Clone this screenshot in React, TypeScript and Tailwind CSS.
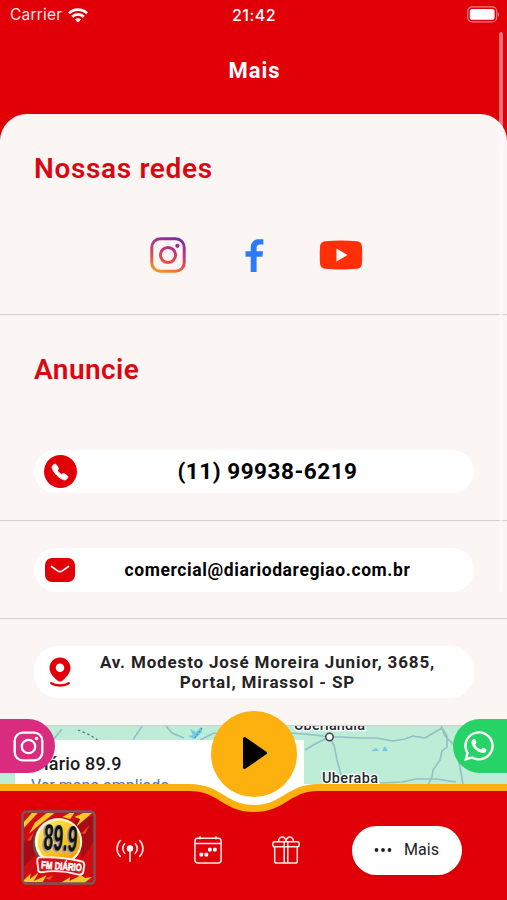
import type { ReactNode } from 'react'
import { FaWhatsapp } from 'react-icons/fa'
import { IoCall } from 'react-icons/io5'

function StatusBar() {
    return (
        <div className="grid grid-cols-3 items-center h-[30px] pl-2.5 pr-[7px] text-white">
            <div className="flex items-center gap-[6px]">
                <span className="font-['Inter'] text-[15.5px] leading-none tracking-[0.2px] opacity-90">Carrier</span>
                <svg width="20" height="15" viewBox="0 0 20 15" fill="none" stroke="white" strokeWidth="2.7">
                    <path d="M1 5.4a12.8 12.8 0 0 1 18 0" />
                    <path d="M4.2 8.7a8.2 8.2 0 0 1 11.6 0" />
                    <path d="M10 14.6 6.9 11.5a4.4 4.4 0 0 1 6.2 0z" fill="white" stroke="none" />
                </svg>
            </div>
            <span className="font-['Inter'] font-medium text-[16px] leading-none tracking-[0.5px] text-center pr-[2px]">21:42</span>
            <div className="flex justify-end mb-px">
                <svg width="33" height="17" viewBox="0 0 33 17" fill="none">
                    <rect x="0.7" y="0.9" width="29" height="15" rx="4.5" stroke="white" strokeOpacity="0.5" strokeWidth="1.2" />
                    <rect x="2.8" y="3" width="24.8" height="10.8" rx="2.6" fill="white" />
                    <path d="M31 6.5v4c1.7-.7 1.7-3.3 0-4z" fill="white" fillOpacity="0.5" />
                </svg>
            </div>
        </div>
    )
}

function InstagramIcon() {
    return (
        <svg width="36" height="36" viewBox="0 0 36 36" fill="none" stroke="url(#ig)" strokeWidth="3">
            <defs>
                <linearGradient id="ig" x1="10" y1="36" x2="22" y2="0" gradientUnits="userSpaceOnUse">
                    <stop offset="0" stopColor="#f99a26" />
                    <stop offset="0.35" stopColor="#e2504a" />
                    <stop offset="0.65" stopColor="#c4327f" />
                    <stop offset="1" stopColor="#7a2fa0" />
                </linearGradient>
            </defs>
            <rect x="1.8" y="1.8" width="32.4" height="32.4" rx="8.5" />
            <circle cx="18" cy="18" r="7.6" />
            <circle cx="27.4" cy="8.8" r="2.1" fill="#9c2c92" stroke="none" />
        </svg>
    )
}

function PinIcon() {
    return (
        <svg width="22" height="30" viewBox="0 0 22 30" fill="none">
            <path fillRule="evenodd" d="M11 .5C4.9 .5.5 5.2.5 11c0 5.4 4.6 9.6 8 12.6 1.5 1.3 3.5 1.3 5 0 3.4-3 8-7.2 8-12.6C21.5 5.2 17.1.5 11 .5zm0 14.6a4.3 4.3 0 1 1 0-8.6 4.3 4.3 0 0 1 0 8.6z" fill="#e10008" />
            <path d="M2.3 26.2c4.5 3 12.9 3 17.4 0" stroke="#e10008" strokeWidth="2.4" strokeLinecap="round" />
        </svg>
    )
}

function ContactRow({ icon, children, className }: { icon: ReactNode; children: ReactNode; className: string }) {
    return (
        <div className={`flex items-center bg-white ml-[34px] mr-[33px] pl-[9px] rounded-[24px] ${className}`}>
            <div className="flex items-center justify-center w-[34px] shrink-0">{icon}</div>
            <div className="flex-1 pr-[16px] text-center font-bold text-black">{children}</div>
        </div>
    )
}

function MapPreview() {
    return (
        <div className="relative h-[59px] overflow-hidden bg-[#bdecd7] border-t border-[#cfcfcf]">
            <svg className="absolute inset-0" width="507" height="59" viewBox="0 0 507 59" fill="none">
                <g stroke="#94bfc5" strokeWidth="1.6" strokeLinejoin="round">
                    <path d="M53 14l9-11M133 14c3-6 6-8 9-14M166 0l6 7 12 5M200 14l14-7 12 3" />
                    <path d="M290 7l25 2 14 2 12 0 16 1 20 0 16 3 12-2 8-3 12 2 10-6 7-4 5 8v11l-5 4-2 9-7 10-1 7-4 8M305 24l10-6 14-7 5 8 3 15 6 22M380 57l22-1 14-3 20 0 20 3M441 0l4 10 9 9 5 17 4 22" />
                </g>
                <path d="M78 4l12 5 9 6" stroke="#5d7d7f" strokeWidth="1.3" strokeDasharray="2.5 2.5" />
                <path d="M190 3l6 3 5-5 1 5-4 4-4 3-6-3 5-1zM371 25l5-3 3 3zM382 25l3-5 3 5z" fill="#70cbe9" />
                <path d="M202 2l-8 11" stroke="#4c98aa" strokeWidth="1.3" strokeDasharray="2 1.5" />
                <circle cx="329.5" cy="11" r="3.7" fill="white" stroke="#3d4546" strokeWidth="1.5" />
                <g className="font-['Roboto'] font-medium" fill="#24282a" stroke="white" strokeWidth="2.5" paintOrder="stroke" fontSize="14.5">
                    <text x="294" y="3.5" textLength="71">Uberlândia</text>
                    <text x="322" y="57" textLength="56">Uberaba</text>
                </g>
            </svg>
            <div className="absolute left-[15px] top-[14px] w-[289px] h-[60px] bg-white pl-4 pt-[15px] font-['Roboto'] leading-none">
                <p className="text-[18px] font-medium tracking-[0.2px] text-[#1b1b1b] pl-px">Diário 89.9</p>
                <p className="text-[16px] text-[#4278d2] mt-[5px]">Ver mapa ampliado</p>
            </div>
        </div>
    )
}

function StationLogo() {
    return (
        <svg className="mb-[5px]" width="75" height="75" viewBox="0 0 76 76">
            <defs>
                <linearGradient id="disc" x1="0" y1="0" x2="1" y2="1">
                    <stop offset="0" stopColor="#fff36a" />
                    <stop offset="0.5" stopColor="#ffc81b" />
                    <stop offset="1" stopColor="#f28b09" />
                </linearGradient>
                <clipPath id="logoClip"><rect x="2" y="2" width="72" height="72" rx="3" /></clipPath>
            </defs>
            <g clipPath="url(#logoClip)">
                <rect width="76" height="76" fill="#d30b12" />
                <path d="M0 36L30 8 16 44 2 58zM54 10l22-4v22L62 50z" fill="#a80b12" />
                <path d="M3 12L11 3h6L3 18zM14 13L26 3h8L20 14 8 24zM54 7l9-4h9L56 17l4-8zM50 9l-8-2 7-4h5zM2 72l8-8-1 6 9-7-5 9 13-6-4 7H2zM40 74l10-6-1 4 12-6 4 3 7-1-8 6z" fill="#f8c829" />
                <path d="M6 31l7-8-3 8zM24 69l9-3-4 5zM61 24l8-8-4 8z" fill="#ee4a1c" />
                <circle cx="35" cy="34" r="23" fill="#5b5554" />
                <circle cx="38" cy="32" r="24" fill="#fff8dc" />
                <circle cx="38.5" cy="32" r="21.5" fill="url(#disc)" />
                <g transform="rotate(4 40 32)" fontFamily="'Liberation Sans Narrow', 'Liberation Sans', sans-serif" fontWeight="700" fontSize="37">
                    <text x="21.5" y="42" textLength="34" lengthAdjust="spacingAndGlyphs" fill="#9a9690" stroke="#b9b5ad" strokeWidth="2.5" paintOrder="stroke">89.9</text>
                    <text x="23" y="41" textLength="34" lengthAdjust="spacingAndGlyphs" fill="#111">89.9</text>
                </g>
                <path d="M19 48Q40 47 61 52q4 1 3 5l-1 6q-1 3-5 2.5Q39 60 21 63q-4 .5-3.5-3.5l-1-7q-.4-4 2.5-4.5z" fill="#d8121a" stroke="#f8efe5" strokeWidth="2" />
                <g transform="rotate(4 40 58)">
                    <text x="20.5" y="60.5" textLength="41" lengthAdjust="spacingAndGlyphs" fill="white" stroke="white" strokeWidth="0.6" fontFamily="'Liberation Sans', sans-serif" fontWeight="700" fontSize="10.5">FM DIÁRIO</text>
                </g>
            </g>
            <rect x="1.5" y="1.5" width="73" height="73" rx="4" fill="none" stroke="#75595a" strokeWidth="2.4" />
        </svg>
    )
}

function BottomNav() {
    return (
        <nav className="relative h-[116px]">
            <svg className="absolute left-0 top-0" width="507" height="116" viewBox="0 0 507 116" fill="none">
                <path d="M180 0H328L300 24H208z" fill="white" />
                <path d="M-5 3.5H190C220 3.5 224 24.5 254 24.5S288 3.5 318 3.5H512V120H-5z" fill="#e10008" stroke="#fdb10e" strokeWidth="7" />
            </svg>
            <button className="absolute left-[211px] top-[-73px] w-[86px] h-[86px] rounded-full bg-[#fdb10e] flex items-center justify-center">
                <svg width="26" height="34" viewBox="0 0 26 34" className="ml-[2px] mb-[2px]">
                    <path d="M2.5 2.5v29L23.5 17z" fill="black" stroke="black" strokeWidth="3" strokeLinejoin="round" />
                </svg>
            </button>
            <div className="relative flex items-center h-full pt-[16px] pl-[21px]">
                <StationLogo />
                <svg className="ml-[20px]" width="28" height="28" viewBox="0 0 28 28" fill="none" stroke="#ffe9e9" strokeWidth="1.6" strokeLinecap="round">
                    <circle cx="14" cy="12.5" r="3.2" fill="white" stroke="none" />
                    <path d="M14 13v12.5M8.7 7.8a6.6 6.6 0 0 0 0 9.4M19.3 7.8a6.6 6.6 0 0 1 0 9.400M4.3 4.500a11.500 11.500 0 0 0 0 16M23.700 4.500a11.500 11.500 0 0 1 0 16" />
                </svg>
                <svg className="ml-[50px]" width="28" height="28" viewBox="0 0 28 28" fill="none" stroke="#ffe9e9" strokeWidth="1.5" strokeLinecap="round">
                    <rect x="0.9" y="2.2" width="26.2" height="24.8" rx="3" />
                    <path d="M1 7.5h26M6 .7v2M22 .7v2" />
                    <g fill="white" stroke="none">
                        <rect x="5.5" y="16.8" width="3.7" height="3.7" rx="1" />
                        <rect x="10.5" y="16.8" width="3.7" height="3.7" rx="1" />
                        <rect x="14" y="11.8" width="3.7" height="3.7" rx="1" />
                        <rect x="19" y="11.8" width="3.7" height="3.7" rx="1" />
                    </g>
                </svg>
                <svg className="ml-[50px]" width="28" height="28" viewBox="0 0 28 28" fill="none" stroke="#ffe9e9" strokeWidth="1.5" strokeLinejoin="round">
                    <rect x="0.9" y="5.8" width="26.2" height="5" rx="1.5" />
                    <path d="M2.7 10.8v14.4q0 1.8 1.8 1.8h19q1.8 0 1.8-1.8V10.8M12.2 5.8V27M15.8 5.8V27M14 5.7c0-6.5-8-6-7.3 0M14 5.7c0-6.5 8-6 7.3 0" />
                </svg>
                <button className="ml-[52px] w-[110px] h-[49px] rounded-full bg-white flex items-center pl-[22px] gap-[12px] text-[#202020] shadow-sm">
                    <svg width="18" height="6" viewBox="0 0 18 6" fill="#202020">
                        <circle cx="2.5" cy="3" r="1.9" />
                        <circle cx="9" cy="3" r="1.9" />
                        <circle cx="15.5" cy="3" r="1.9" />
                    </svg>
                    <span className="text-[16px] tracking-[0.1px]">Mais</span>
                </button>
            </div>
        </nav>
    )
}

export default function App() {
    return (
        <div className="relative flex flex-col w-[507px] h-[900px] overflow-hidden bg-[#e10008] font-['Roboto']">
            <StatusBar />
            <header className="flex items-center justify-center h-[84px] pb-[4px]">
                <h1 className="text-[22px] font-bold tracking-[0.9px] text-white pl-[2px]">Mais</h1>
            </header>
            <main className="flex flex-col h-[670px] shrink-0 bg-[#fbf5f4] rounded-t-[27px] overflow-hidden">
                <section className="h-[201px] border-b border-[#d3cfcf] pt-[39px]">
                    <h2 className="pl-[34px] text-[28px] leading-[32px] font-semibold tracking-[0.65px] text-[#db0710]">Nossas redes</h2>
                    <div className="flex items-center h-[36px] mt-[52px] pl-[150px]">
                        <InstagramIcon />
                        <svg className="ml-[59px]" width="19" height="33" viewBox="0 0 19 33">
                            <path d="M5.7 33V17.7H.5v-5.5h5.2V9.3C5.7 3.3 9 .3 14.2.3h4.2v5.2h-3.2c-2.6 0-3.6 1.2-3.6 3.7v3h6.5l-.7 5.5h-5.8V33z" fill="#2d7af6" />
                        </svg>
                        <svg className="ml-[55px]" width="44" height="30" viewBox="0 0 44 30">
                            <path d="M6 1.2Q22-.3 38 1.2q4.5.6 4.9 4.8.7 9 0 18-.4 4.2-4.9 4.8-16 1.5-32 0-4.5-.6-4.9-4.8-.7-9 0-18 .4-4.2 4.900-4.800z" fill="#ff2f08" />
                            <path d="M17.5 8.5v13L28.5 15z" fill="white" />
                        </svg>
                    </div>
                </section>
                <section className="h-[206px] border-b border-[#d3cfcf] pt-[39px]">
                    <h2 className="pl-[34px] text-[28px] leading-[32px] font-semibold tracking-[0.45px] text-[#db0710]">Anuncie</h2>
                    <ContactRow
                        className="h-[43px] mt-[64px] text-[22.5px] tracking-[0.52px]"
                        icon={
                            <span className="flex items-center justify-center w-[33px] h-[33px] rounded-full bg-[#e10008]">
                                <IoCall className="w-[18px] h-[18px] text-white" stroke="white" strokeWidth="26" />
                            </span>
                        }
                    >
                        (11) 99938-6219
                    </ContactRow>
                </section>
                <section className="h-[98px] border-b border-[#d3cfcf] pt-[27px]">
                    <ContactRow
                        className="h-[44px] text-[17.5px] tracking-[0.6px]"
                        icon={
                            <svg width="30" height="24" viewBox="0 0 30 24" fill="none">
                                <rect width="30" height="24" rx="7" fill="#e10008" />
                                <path d="M6.5 8.5l6.2 4.4q2.3 1.5 4.6 0l6.2-4.4" stroke="white" strokeWidth="1.7" strokeLinecap="round" />
                            </svg>
                        }
                    >
                        comercial@diariodaregiao.com.br
                    </ContactRow>
                </section>
                <section className="h-[106px] pt-[27px]">
                    <ContactRow className="h-[52px] text-[17px] leading-[20px] tracking-[0.85px]" icon={<PinIcon />}>
                        <span className="text-[#252323]">Av. Modesto José Moreira Junior, 3685,<br />Portal, Mirassol - SP</span>
                    </ContactRow>
                </section>
                <MapPreview />
            </main>
            <BottomNav />
            <div className="absolute left-0 top-[719px] w-[55px] h-[54px] rounded-r-[27px] bg-[#d92c7f] pl-[13px] flex items-center">
                <svg width="31" height="31" viewBox="0 0 31 31" fill="none" stroke="white" strokeWidth="2.3">
                    <rect x="1.7" y="1.7" width="27.6" height="27.6" rx="8" />
                    <circle cx="15.5" cy="15.5" r="6.7" />
                    <circle cx="23.5" cy="7.5" r="1.7" fill="white" stroke="none" />
                </svg>
            </div>
            <div className="absolute right-0 top-[719px] w-[54px] h-[54px] rounded-l-[27px] bg-[#25d366] pl-[9px] flex items-center">
                <FaWhatsapp className="w-[34px] h-[34px] text-white" />
            </div>
            <div className="absolute left-[499px] top-[32px] w-[4px] h-[560px] rounded-full bg-white/45" />
        </div>
    )
}
